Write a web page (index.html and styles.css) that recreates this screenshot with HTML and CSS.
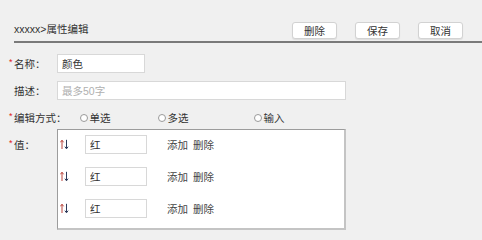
FILE: index.html
```html
<!DOCTYPE html>
<html lang="zh-CN">
<head>
  <meta charset="UTF-8">
  <meta name="viewport" content="width=device-width, initial-scale=1.0">
  <title>属性编辑</title>
  <link rel="stylesheet" href="styles.css">
</head>
<body>

<!-- Header -->
<div class="page-header">
  <div class="page-title">xxxxx&gt;属性编辑</div>
  <div class="header-actions">
    <button class="btn">删除</button>
    <button class="btn">保存</button>
    <button class="btn">取消</button>
  </div>
</div>

<!-- Form -->
<div class="edit-form">
  <div class="form-row">
    <label class="form-label"><span class="req">*</span>名称：</label>
    <input class="text-input name-input" type="text" value="颜色">
  </div>

  <div class="form-row">
    <label class="form-label"><span class="req hidden">*</span>描述：</label>
    <input class="text-input desc-input" type="text" placeholder="最多50字">
  </div>

  <div class="form-row radio-row">
    <label class="form-label"><span class="req">*</span>编辑方式：</label>
    <div class="radio-group">
      <span class="radio-item"><span class="radio-dot"></span>单选</span>
      <span class="radio-item wide"><span class="radio-dot"></span>多选</span>
      <span class="radio-item"><span class="radio-dot"></span>输入</span>
    </div>
  </div>

  <div class="form-row values-row">
    <label class="form-label values-label"><span class="req">*</span>值：</label>
    <div class="values-box">
      <div class="value-item">
        <svg class="sort-icon" width="9" height="11" viewBox="0 0 9 11">
          <path d="M2 10V1.5M0.4 3.3L2 1.2L3.6 3.3" stroke="#b8433a" stroke-width="1" fill="none"/>
          <path d="M6.5 0.8V9.5M4.9 7.7L6.5 9.8L8.1 7.7" stroke="#2c3a5a" stroke-width="1" fill="none"/>
        </svg>
        <input class="text-input value-input" type="text" value="红">
        <a class="link">添加</a>
        <a class="link">删除</a>
      </div>
      <div class="value-item">
        <svg class="sort-icon" width="9" height="11" viewBox="0 0 9 11">
          <path d="M2 10V1.5M0.4 3.3L2 1.2L3.6 3.3" stroke="#b8433a" stroke-width="1" fill="none"/>
          <path d="M6.5 0.8V9.5M4.9 7.7L6.5 9.8L8.1 7.7" stroke="#2c3a5a" stroke-width="1" fill="none"/>
        </svg>
        <input class="text-input value-input" type="text" value="红">
        <a class="link">添加</a>
        <a class="link">删除</a>
      </div>
      <div class="value-item">
        <svg class="sort-icon" width="9" height="11" viewBox="0 0 9 11">
          <path d="M2 10V1.5M0.4 3.3L2 1.2L3.6 3.3" stroke="#b8433a" stroke-width="1" fill="none"/>
          <path d="M6.5 0.8V9.5M4.9 7.7L6.5 9.8L8.1 7.7" stroke="#2c3a5a" stroke-width="1" fill="none"/>
        </svg>
        <input class="text-input value-input" type="text" value="红">
        <a class="link">添加</a>
        <a class="link">删除</a>
      </div>
    </div>
  </div>
</div>

</body>
</html>
```

FILE: styles.css
```css
/* --- Page --- */
body {
  margin: 0;
  background-color: #f0f0f0;
  color: #333;
  font-family: "Liberation Sans", "Noto Sans CJK SC", sans-serif;
  font-size: 10.5px;
}

/* --- Header --- */
.page-header {
  display: flex;
  align-items: flex-end;
  justify-content: space-between;
  height: 17px;
  margin: 22px 0 0 14px;
  padding: 0 19px 2px 0;
  border-bottom: 2px solid #7a7a7a;
}

.page-title {
  line-height: 17px;
  padding-bottom: 1px;
}

.header-actions {
  display: flex;
  gap: 18px;
}

.btn {
  width: 45px;
  height: 17px;
  padding: 0;
  font-family: inherit;
  font-size: 10.5px;
  color: #333;
  background-color: #fff;
  border: 1px solid #d2d2d2;
  border-radius: 3px;
  box-shadow: 0 1px 1px rgba(0,0,0,0.08);
}

/* --- Form --- */
.edit-form {
  padding: 11px 0 0 9px;
}

.form-row {
  display: flex;
  align-items: center;
  height: 19px;
  margin-bottom: 8px;
}

.form-label {
  display: flex;
  align-items: center;
  min-width: 48px;
  height: 19px;
  white-space: nowrap;
}

.req {
  width: 5px;
  margin-top: -3px;
  color: #e02020;
  font-size: 9px;
  line-height: 9px;
}

.req.hidden {
  visibility: hidden;
}

.text-input {
  box-sizing: border-box;
  height: 19px;
  margin: 0;
  padding: 0 4px;
  font-family: inherit;
  font-size: 10.5px;
  color: #333;
  background-color: #fff;
  border: 1px solid #d8d8d8;
  outline: none;
}

.text-input::placeholder {
  color: #b0b0b0;
}

.name-input {
  width: 88px;
}

.desc-input {
  width: 289px;
}

/* --- Radios --- */
.radio-row {
  margin-bottom: 2px;
}

.radio-group {
  display: flex;
  padding-left: 13px;
}

.radio-item {
  display: flex;
  align-items: center;
  width: 78px;
}

.radio-item.wide {
  width: 96px;
}

.radio-dot {
  box-sizing: border-box;
  width: 8px;
  height: 8px;
  margin-right: 2px;
  border: 1px solid #9a9a9a;
  border-radius: 50%;
  background-color: #fff;
}

/* --- Values --- */
.values-row {
  align-items: flex-start;
  height: auto;
}

.values-label {
  margin-top: 6px;
}

.values-box {
  box-sizing: border-box;
  width: 289px;
  padding: 5px 0 10px 2px;
  background-color: #fff;
  border-top: 1px solid #9c9c9c;
  border-left: 1px solid #9c9c9c;
  border-right: 2px solid #c4c4c4;
  border-bottom: 2px solid #c4c4c4;
}

.value-item {
  display: flex;
  align-items: center;
  height: 19px;
  margin-bottom: 13px;
}

.value-item:last-child {
  margin-bottom: 0;
}

.sort-icon {
  margin-right: 16px;
}

.value-input {
  width: 62px;
  margin-right: 20px;
}

.link {
  margin-right: 5px;
  color: #444;
  cursor: pointer;
}
```
